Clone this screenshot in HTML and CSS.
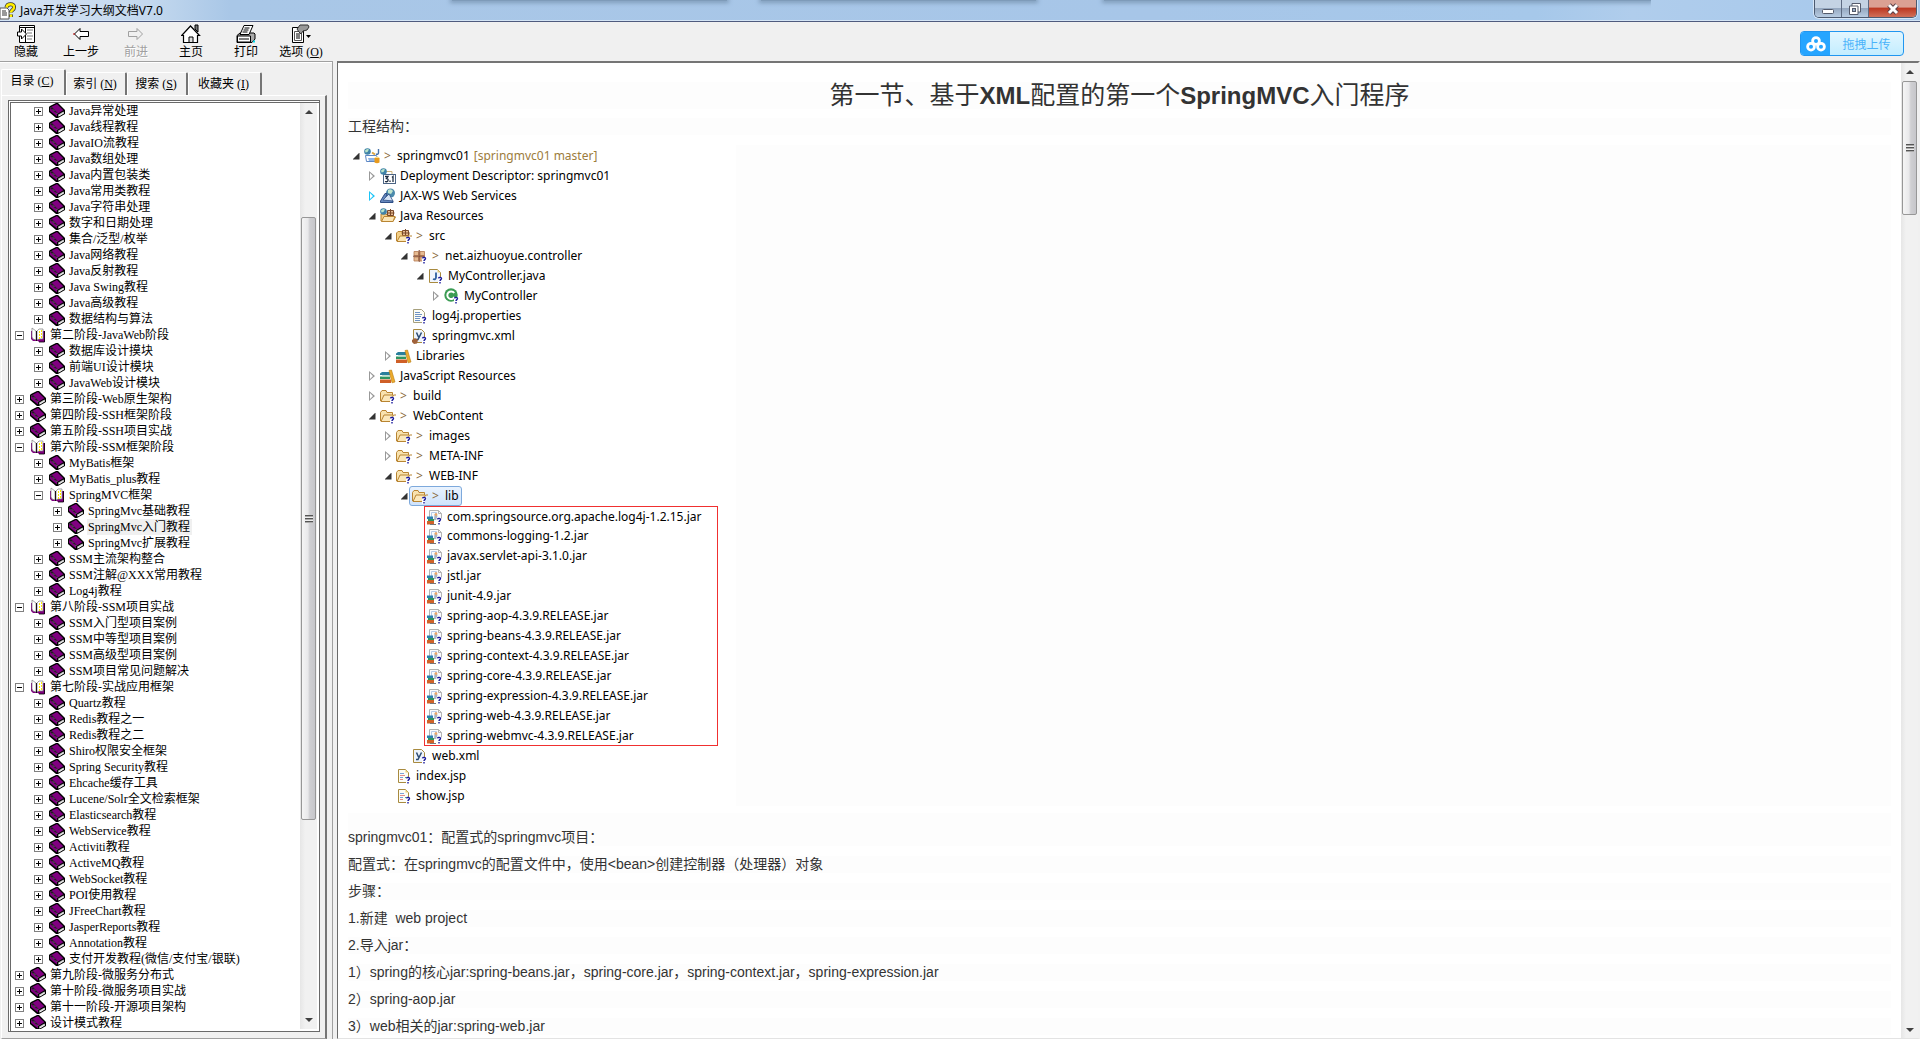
FILE: index.html
```html
<!DOCTYPE html>
<html lang="zh-CN">
<head>
<meta charset="utf-8">
<title>Java开发学习大纲文档V7.0</title>
<link rel="stylesheet" href="styles.css">
</head>
<body>
<svg class="sprite" aria-hidden="true">
  <symbol id="book" viewBox="0 0 16 16">
    <path d="M0 4 1 3 7 0h2l7 7v4l-7 4H7L0 9z" fill="#000"/>
    <path d="M2.500 3.800 8 1l6.300 6.200L9 10.500z" fill="#800080"/>
    <path d="M1 4.800 8 11v2.500L1 8z" fill="#800080"/>
    <path d="M9 11.800 14.500 8.500l.5 1.800L9.500 13.800z" fill="#c8c8c8"/>
    <path d="M10 12.800l5-3" stroke="#fff" stroke-width=".8"/>
    <path d="M2 4.500 8.500 11" stroke="#e8b8e8" stroke-width=".9" stroke-dasharray="1 1"/>
  </symbol>
  <symbol id="open" viewBox="0 0 16 16">
    <path d="M1 4h14v11H9l-1-1H3L1 12z" fill="#800080"/>
    <path d="M2 1l4 3v9L3 12 2 10zM7 4l2-2h4v10H9l-2 1z" fill="#fff" stroke="#808080" stroke-width=".7"/>
    <path d="M9.500 4v8M11.500 3v8" stroke="#ffe600" stroke-width="1" stroke-dasharray="2 1"/>
    <path d="M6.500 4v10M14.500 4v11H9" stroke="#000" fill="none" stroke-width=".8"/>
  </symbol>
  <symbol id="q" viewBox="0 0 16 16"><path d="M10 9h4.500v3H13v4h-3z" fill="#fff"/><path d="M10.500 10.300c.3-1.300 3.200-1.200 3 .3 0 1-1.500 1.100-1.500 2.400M12 14v1.500" fill="none" stroke="#1a1a9c" stroke-width="1.400"/></symbol>
  <symbol id="globe" viewBox="0 0 16 16"><circle cx="3.500" cy="3.500" r="3.300" fill="#3f83a8"/><path d="M1 2.500Q3 0 5 1.500L3.500 4 1.500 4.500z" fill="#b9e3c8"/></symbol>
  <symbol id="folder" viewBox="0 0 16 16"><path d="M.5 13V4.500L2 2.500h4l1 2h5.500V7" fill="#f8e2ae" stroke="#b98532"/><path d="M1 13.500 4 7h9.500l-3 6.500z" fill="#fbe8bb" stroke="#b98532"/><path d="M15 6v2" stroke="#b98532"/><use href="#q"/></symbol>
  <symbol id="project" viewBox="0 0 16 16"><path d="M1.500 7.500h11l2 6h-12z" fill="#fff" stroke="#5b86c4"/><path d="M4 10h8l1 3H5z" fill="#8fb5e6"/><path d="M8 4.500l3 2" stroke="#d9a441" stroke-width="2"/><path d="M14.500 1v4q-.5 2-2.500 1" fill="none" stroke="#4772aa" stroke-width="1.400"/><ellipse cx="13" cy="10" rx="2.500" ry="1.200" fill="#ffe08a"/><path d="M10.500 10h5v4.500q-2.500 1.500-5 0z" fill="#e89a1c"/><use href="#globe"/></symbol>
  <symbol id="deploy" viewBox="0 0 16 16"><path d="M5 3.500h7v4" fill="none" stroke="#c9b27c"/><rect x="3.500" y="6.500" width="12" height="9" fill="#fff" stroke="#4b6484"/><path d="M5 8.500h3l-1.500 2Q8.500 10.700 8 12.500T5 13.500M10 12.500v1.500M12 9.500l1-1V14" fill="none" stroke="#1d2c40" stroke-width="1.300"/><use href="#globe"/></symbol>
  <symbol id="ws" viewBox="0 0 16 16"><circle cx="10.500" cy="5" r="4.500" fill="#4b8aac"/><path d="M8 2q3-2 5 1l-2 3-3-1z" fill="#c1e4cd"/><path d="M.5 13 5 5.500h2L6 9l3 3 4 1v1.500H.5z" fill="#6587bd" stroke="#2f4f86"/><path d="M3 12 9 6l4 7z" fill="#d5e2f4" stroke="#2f4f86" stroke-width=".8"/></symbol>
  <symbol id="jres" viewBox="0 0 16 16"><path d="M1 13V6h5l1 1h6v2h2.500L13 13.500z" fill="#f3cf87" stroke="#b98532"/><path d="M7.500 2.500h6v5h-6zM10.500 1v7M6.500 5h8" fill="#e8bd93" stroke="#7b4a2b"/><path d="M4 8.500h11l-2 5H1.500z" fill="#fbe6b7" stroke="#b98532"/><use href="#globe"/></symbol>
  <symbol id="src" viewBox="0 0 16 16"><path d="M.5 13V5L2 3.500h4l1 1h6V8" fill="#f3cf87" stroke="#b98532"/><path d="M6.500 2.500h6v5h-6zM9.500 1v7M5.500 5h8" fill="#e8bd93" stroke="#7b4a2b"/><path d="M1 13.500 4 8h9l-2 5.500z" fill="#fbe6b7" stroke="#b98532"/><path d="M15 7v2" stroke="#b98532"/><use href="#q"/></symbol>
  <symbol id="pkg" viewBox="0 0 16 16"><path d="M2 3.500h4.500v4H2zM8 3.500h4.500v4H8zM2 9h4.500v4H2zM8 9h4.500v4H8z" fill="#e6bb92" stroke="#b47a52" stroke-width=".8"/><path d="M7.200 2v12M1 8.200h12" stroke="#7b3f22"/><use href="#q"/></symbol>
  <symbol id="java" viewBox="0 0 16 16"><path d="M1.500 1.500h8l3 3v10h-11z" fill="#f1f6fd" stroke="#a88a3f"/><path d="M9.500 1.500v3h3z" fill="#e8cc7c"/><path d="M8 4.500v5q-.3 2.500-3 1.500" fill="none" stroke="#2f5f9f" stroke-width="1.800"/><use href="#q"/></symbol>
  <symbol id="cls" viewBox="0 0 16 16"><circle cx="7" cy="7" r="6.700" fill="#3c9c54"/><path d="M10.200 5A3.800 3.800 0 1 0 10.500 9" fill="none" stroke="#fff" stroke-width="2"/><use href="#q"/></symbol>
  <symbol id="props" viewBox="0 0 16 16"><path d="M1.500 1.500h8l3 3v10h-11z" fill="#fdfdf6" stroke="#a6a07d"/><path d="M3 4.500h5M3 6.500h7M3 8.500h6M3 10.500h5M3 12.500h5" stroke="#6f93c4"/><use href="#q"/></symbol>
  <symbol id="xml" viewBox="0 0 16 16"><path d="M1.500 1.500h8l3 3v10h-11z" fill="#eef4fb" stroke="#a88a3f"/><path d="M4.500 4.500 6.500 9M9.500 4.500 6 11.500H4" fill="none" stroke="#2a4a72" stroke-width="1.500"/><use href="#q"/></symbol>
  <symbol id="bean" viewBox="0 0 16 16"><use href="#xml"/><path d="M0 12l3-2 3 2-1 3.500-3 .5-2-2z" fill="#a0623a"/></symbol>
  <symbol id="lib" viewBox="0 0 16 16"><path d="M0 5.500 2 4h8v3H0z" fill="#2a7f9c"/><path d="M0 8.500h10V11H0z" fill="#2f9560"/><path d="M2 7h8v1.500H2z" fill="#bfe0cf"/><path d="M0 11.500h11v3.500H0z" fill="#cf5f27"/><path d="M9 2.500 11.500 2 15 14l-3 .8z" fill="#edab2c" stroke="#b97c10" stroke-width=".6"/></symbol>
  <symbol id="jar" viewBox="0 0 16 16"><path d="M2.500 15V1.500h9l3 3V10" fill="#fafafa" stroke="#b3b3b3"/><path d="M11.500 1.500v3h3" fill="none" stroke="#b3b3b3"/><path d="M4.500 3.500h5v5M4.500 3.500v5" fill="none" stroke="#b5cbe8"/><path d="M7.500 5.500 9 4l1.500 3L9 11H7z" fill="#a9b3bf"/><circle cx="9" cy="5.500" r="1.300" fill="#f0a560"/><path d="M0 7.500h6V10H0z" fill="#2a7fb0"/><path d="M1 10h6v2H1z" fill="#2f9560"/><path d="M0 12h7v3.500H0z" fill="#d0622a"/><path d="M3 15.500h6" stroke="#777"/><use href="#q"/></symbol>
  <symbol id="jsp" viewBox="0 0 16 16"><path d="M2.500 1.500h7l3 3v10h-10z" fill="#fdfdf6" stroke="#a88a3f"/><path d="M9.500 1.500v3h3z" fill="#e8cc7c"/><path d="M4 5.500h4M4 9.500h3" stroke="#7ba0d8"/><path d="M4 7.500h5M4 11.500h3" stroke="#e28a8a"/><path d="M9 9.500h2" stroke="#62b07a"/><use href="#q"/></symbol>
</svg>

<header class="titlebar">
  <svg class="app-icon" viewBox="0 0 16 16"><path d="M0 5h7l2 2v9H0z" fill="#fff" stroke="#555"/><path d="M2 8h4M2 10h5M2 12h5" stroke="#333"/><path d="M6.500 4.500C7 0 14.500 0 14 4.500c0 2.500-3 2.500-3 5M11 11.500V14" fill="none" stroke="#333" stroke-width="4"/><path d="M6.500 4.500C7 0 14.500 0 14 4.500c0 2.500-3 2.500-3 5M11 11.500V14" fill="none" stroke="#ffee00" stroke-width="2.500"/></svg>
  <span class="caption">Java开发学习大纲文档V7.0</span>
  <div class="behind"><i></i><i></i><i></i></div>
  <div class="winbtns">
    <button class="wb" aria-label="最小化"><svg viewBox="0 0 14 14"><rect x="1.500" y="7.500" width="11" height="4" rx="1" fill="#fff" stroke="#535a6b"/></svg></button>
    <button class="wb" aria-label="还原"><svg viewBox="0 0 14 14"><path d="M4 1.500h8.500V10H4z" fill="#fff" stroke="#535a6b"/><path d="M1.500 4H10v8.500H1.500z" fill="#fff" stroke="#535a6b"/><rect x="4.500" y="6.500" width="3" height="3" fill="#9cb0c8" stroke="#535a6b"/></svg></button>
    <button class="wb close" aria-label="关闭"><svg viewBox="0 0 14 14"><path d="M3 3l8 8M11 3l-8 8" stroke="#5a4048" stroke-width="5"/><path d="M3 3l8 8M11 3l-8 8" stroke="#fff" stroke-width="3"/></svg></button>
  </div>
</header>

<nav class="toolbar">
  <button class="tool"><svg viewBox="0 0 20 20"><path d="M3.500 1.500h15v17h-15z" fill="#fff" stroke="#000"/><path d="M3 3.500h16M9.500 3v15" stroke="#000"/><path d="M11 6h6M11 9h5M11 12h6M11 15h5" stroke="#777"/><path d="M1.500 8h4V5l5 5-5 5v-3h-4z" fill="#fff" stroke="#000"/></svg>隐藏</button>
  <button class="tool"><svg viewBox="0 0 20 20"><path d="M9 4.500 3.500 10 9 15.500v-3h8.500v-5H9z" fill="#fff" stroke="#000"/><path d="M3 9v2" stroke="#b00"/></svg>上一步</button>
  <button class="tool" disabled><svg viewBox="0 0 20 20"><path d="M11 4.500 16.500 10 11 15.500v-3H2.500v-5H11z" fill="#f0f0f0" stroke="#a0a0a0"/></svg>前进</button>
  <button class="tool"><svg viewBox="0 0 20 20"><path d="M14 1h3v7l-3-3z" fill="#777" stroke="#000"/><path d="M.7 11.500 9.500 2l9 9.500h-2v7h-14v-7z" fill="#fff" stroke="#000" stroke-width="1.200"/><path d="M8 18v-5h4v5" fill="#ddd" stroke="#000"/></svg>主页</button>
  <button class="tool"><svg viewBox="0 0 20 20"><path d="M1 11.500 4 9h14l1 1v5l-3 3.500H1z" fill="#aaa" stroke="#000"/><path d="M4 10.500 8 1.500h9L13 10.500z" fill="#fff" stroke="#000"/><path d="M8.500 4h5M7.500 6h5M6.500 8h5" stroke="#000"/><path d="M1.500 12h13v6H1.500z" fill="#fff" stroke="#000"/><path d="M3 15h10" stroke="#000"/><path d="M17 17.500h2" stroke="#00d8e8" stroke-width="2"/></svg>打印</button>
  <button class="tool"><svg viewBox="0 0 20 20"><path d="M1.500 3.500h11v15h-11z" fill="#fff" stroke="#000"/><path d="M3.500 7.500h7v9h-7z" fill="#fff" stroke="#555"/><path d="M5 10h4M5 12h4M5 14h4" stroke="#000"/><path d="M6 5 9 1h8l1 2-2 3-4 1-2 3-2-2z" fill="#999" stroke="#333"/><path d="M15 11h5l-2.500 3z" fill="#000"/></svg>选项 (<u>O</u>)</button>
  <button class="upload"><span class="cloud"><svg viewBox="0 0 20 16"><g fill="none" stroke="#fff" stroke-width="2.800"><circle cx="10" cy="5" r="3.400"/><circle cx="5" cy="10.700" r="3.400"/><circle cx="15" cy="10.700" r="3.400"/></g></svg></span><span class="uptext">拖拽上传</span></button>
</nav>

<div class="work">
<aside class="side">
  <div class="tabs" role="tablist">
    <button class="tab on" role="tab">目录 (<u>C</u>)</button>
    <button class="tab" role="tab">索引 (<u>N</u>)</button>
    <button class="tab" role="tab">搜索 (<u>S</u>)</button>
    <button class="tab wide" role="tab">收藏夹 (<u>I</u>)</button>
  </div>
  <div class="panel">
    <div class="treebox">
      <ul class="toc">
        <li class="l1"><button class="tg"></button><svg><use href="#book"/></svg><a href="#">Java异常处理</a></li>
        <li class="l1"><button class="tg"></button><svg><use href="#book"/></svg><a href="#">Java线程教程</a></li>
        <li class="l1"><button class="tg"></button><svg><use href="#book"/></svg><a href="#">JavaIO流教程</a></li>
        <li class="l1"><button class="tg"></button><svg><use href="#book"/></svg><a href="#">Java数组处理</a></li>
        <li class="l1"><button class="tg"></button><svg><use href="#book"/></svg><a href="#">Java内置包装类</a></li>
        <li class="l1"><button class="tg"></button><svg><use href="#book"/></svg><a href="#">Java常用类教程</a></li>
        <li class="l1"><button class="tg"></button><svg><use href="#book"/></svg><a href="#">Java字符串处理</a></li>
        <li class="l1"><button class="tg"></button><svg><use href="#book"/></svg><a href="#">数字和日期处理</a></li>
        <li class="l1"><button class="tg"></button><svg><use href="#book"/></svg><a href="#">集合/泛型/枚举</a></li>
        <li class="l1"><button class="tg"></button><svg><use href="#book"/></svg><a href="#">Java网络教程</a></li>
        <li class="l1"><button class="tg"></button><svg><use href="#book"/></svg><a href="#">Java反射教程</a></li>
        <li class="l1"><button class="tg"></button><svg><use href="#book"/></svg><a href="#">Java Swing教程</a></li>
        <li class="l1"><button class="tg"></button><svg><use href="#book"/></svg><a href="#">Java高级教程</a></li>
        <li class="l1"><button class="tg"></button><svg><use href="#book"/></svg><a href="#">数据结构与算法</a></li>
        <li><button class="tg minus"></button><svg><use href="#open"/></svg><a href="#">第二阶段-JavaWeb阶段</a></li>
        <li class="l1"><button class="tg"></button><svg><use href="#book"/></svg><a href="#">数据库设计摸块</a></li>
        <li class="l1"><button class="tg"></button><svg><use href="#book"/></svg><a href="#">前端UI设计模块</a></li>
        <li class="l1"><button class="tg"></button><svg><use href="#book"/></svg><a href="#">JavaWeb设计模块</a></li>
        <li><button class="tg"></button><svg><use href="#book"/></svg><a href="#">第三阶段-Web原生架构</a></li>
        <li><button class="tg"></button><svg><use href="#book"/></svg><a href="#">第四阶段-SSH框架阶段</a></li>
        <li><button class="tg"></button><svg><use href="#book"/></svg><a href="#">第五阶段-SSH项目实战</a></li>
        <li><button class="tg minus"></button><svg><use href="#open"/></svg><a href="#">第六阶段-SSM框架阶段</a></li>
        <li class="l1"><button class="tg"></button><svg><use href="#book"/></svg><a href="#">MyBatis框架</a></li>
        <li class="l1"><button class="tg"></button><svg><use href="#book"/></svg><a href="#">MyBatis_plus教程</a></li>
        <li class="l1"><button class="tg minus"></button><svg><use href="#open"/></svg><a href="#">SpringMVC框架</a></li>
        <li class="l2"><button class="tg"></button><svg><use href="#book"/></svg><a href="#">SpringMvc基础教程</a></li>
        <li class="l2"><button class="tg"></button><svg><use href="#book"/></svg><a href="#" class="cur">SpringMvc入门教程</a></li>
        <li class="l2"><button class="tg"></button><svg><use href="#book"/></svg><a href="#">SpringMvc扩展教程</a></li>
        <li class="l1"><button class="tg"></button><svg><use href="#book"/></svg><a href="#">SSM主流架构整合</a></li>
        <li class="l1"><button class="tg"></button><svg><use href="#book"/></svg><a href="#">SSM注解@XXX常用教程</a></li>
        <li class="l1"><button class="tg"></button><svg><use href="#book"/></svg><a href="#">Log4j教程</a></li>
        <li><button class="tg minus"></button><svg><use href="#open"/></svg><a href="#">第八阶段-SSM项目实战</a></li>
        <li class="l1"><button class="tg"></button><svg><use href="#book"/></svg><a href="#">SSM入门型项目案例</a></li>
        <li class="l1"><button class="tg"></button><svg><use href="#book"/></svg><a href="#">SSM中等型项目案例</a></li>
        <li class="l1"><button class="tg"></button><svg><use href="#book"/></svg><a href="#">SSM高级型项目案例</a></li>
        <li class="l1"><button class="tg"></button><svg><use href="#book"/></svg><a href="#">SSM项目常见问题解决</a></li>
        <li><button class="tg minus"></button><svg><use href="#open"/></svg><a href="#">第七阶段-实战应用框架</a></li>
        <li class="l1"><button class="tg"></button><svg><use href="#book"/></svg><a href="#">Quartz教程</a></li>
        <li class="l1"><button class="tg"></button><svg><use href="#book"/></svg><a href="#">Redis教程之一</a></li>
        <li class="l1"><button class="tg"></button><svg><use href="#book"/></svg><a href="#">Redis教程之二</a></li>
        <li class="l1"><button class="tg"></button><svg><use href="#book"/></svg><a href="#">Shiro权限安全框架</a></li>
        <li class="l1"><button class="tg"></button><svg><use href="#book"/></svg><a href="#">Spring Security教程</a></li>
        <li class="l1"><button class="tg"></button><svg><use href="#book"/></svg><a href="#">Ehcache缓存工具</a></li>
        <li class="l1"><button class="tg"></button><svg><use href="#book"/></svg><a href="#">Lucene/Solr全文检索框架</a></li>
        <li class="l1"><button class="tg"></button><svg><use href="#book"/></svg><a href="#">Elasticsearch教程</a></li>
        <li class="l1"><button class="tg"></button><svg><use href="#book"/></svg><a href="#">WebService教程</a></li>
        <li class="l1"><button class="tg"></button><svg><use href="#book"/></svg><a href="#">Activiti教程</a></li>
        <li class="l1"><button class="tg"></button><svg><use href="#book"/></svg><a href="#">ActiveMQ教程</a></li>
        <li class="l1"><button class="tg"></button><svg><use href="#book"/></svg><a href="#">WebSocket教程</a></li>
        <li class="l1"><button class="tg"></button><svg><use href="#book"/></svg><a href="#">POI使用教程</a></li>
        <li class="l1"><button class="tg"></button><svg><use href="#book"/></svg><a href="#">JFreeChart教程</a></li>
        <li class="l1"><button class="tg"></button><svg><use href="#book"/></svg><a href="#">JasperReports教程</a></li>
        <li class="l1"><button class="tg"></button><svg><use href="#book"/></svg><a href="#">Annotation教程</a></li>
        <li class="l1"><button class="tg"></button><svg><use href="#book"/></svg><a href="#">支付开发教程(微信/支付宝/银联)</a></li>
        <li><button class="tg"></button><svg><use href="#book"/></svg><a href="#">第九阶段-微服务分布式</a></li>
        <li><button class="tg"></button><svg><use href="#book"/></svg><a href="#">第十阶段-微服务项目实战</a></li>
        <li><button class="tg"></button><svg><use href="#book"/></svg><a href="#">第十一阶段-开源项目架构</a></li>
        <li><button class="tg"></button><svg><use href="#book"/></svg><a href="#">设计模式教程</a></li>
      </ul>
      <div class="scroll toc-scroll"><button class="sb" aria-label="向上"><i class="up"></i></button><span class="before"></span><span class="thumb"><i></i></span><span class="after"></span><button class="sb" aria-label="向下"><i class="down"></i></button></div>
    </div>
  </div>
</aside>

<main class="doc">
  <article class="page">
    <h1>第一节、基于<b>XML</b>配置的第一个<b>SpringMVC</b>入门程序</h1>
    <p>工程结构：</p>
    <div class="figure">
    <ul class="ex">
      <li><i class="ar o"></i><svg><use href="#project"/></svg><em>&gt;</em>springmvc01 <span class="repo">[springmvc01 master]</span></li>
      <li class="d1"><i class="ar c"></i><svg><use href="#deploy"/></svg>Deployment Descriptor: springmvc01</li>
      <li class="d1"><i class="ar c hot"></i><svg><use href="#ws"/></svg>JAX-WS Web Services</li>
      <li class="d1"><i class="ar o"></i><svg><use href="#jres"/></svg>Java Resources</li>
      <li class="d2"><i class="ar o"></i><svg><use href="#src"/></svg><em>&gt;</em>src</li>
      <li class="d3"><i class="ar o"></i><svg><use href="#pkg"/></svg><em>&gt;</em>net.aizhuoyue.controller</li>
      <li class="d4"><i class="ar o"></i><svg><use href="#java"/></svg>MyController.java</li>
      <li class="d5"><i class="ar c"></i><svg><use href="#cls"/></svg>MyController</li>
      <li class="d3"><i class="ar"></i><svg><use href="#props"/></svg>log4j.properties</li>
      <li class="d3"><i class="ar"></i><svg><use href="#bean"/></svg>springmvc.xml</li>
      <li class="d2"><i class="ar c"></i><svg><use href="#lib"/></svg>Libraries</li>
      <li class="d1"><i class="ar c"></i><svg><use href="#lib"/></svg>JavaScript Resources</li>
      <li class="d1"><i class="ar c"></i><svg><use href="#folder"/></svg><em>&gt;</em>build</li>
      <li class="d1"><i class="ar o"></i><svg><use href="#folder"/></svg><em>&gt;</em>WebContent</li>
      <li class="d2"><i class="ar c"></i><svg><use href="#folder"/></svg><em>&gt;</em>images</li>
      <li class="d2"><i class="ar c"></i><svg><use href="#folder"/></svg><em>&gt;</em>META-INF</li>
      <li class="d2"><i class="ar o"></i><svg><use href="#folder"/></svg><em>&gt;</em>WEB-INF</li>
      <li class="d3"><i class="ar o"></i><span class="sel"><svg><use href="#folder"/></svg><em>&gt;</em>lib</span></li>
      <li class="jars"><ul>
        <li><svg><use href="#jar"/></svg>com.springsource.org.apache.log4j-1.2.15.jar</li>
        <li><svg><use href="#jar"/></svg>commons-logging-1.2.jar</li>
        <li><svg><use href="#jar"/></svg>javax.servlet-api-3.1.0.jar</li>
        <li><svg><use href="#jar"/></svg>jstl.jar</li>
        <li><svg><use href="#jar"/></svg>junit-4.9.jar</li>
        <li><svg><use href="#jar"/></svg>spring-aop-4.3.9.RELEASE.jar</li>
        <li><svg><use href="#jar"/></svg>spring-beans-4.3.9.RELEASE.jar</li>
        <li><svg><use href="#jar"/></svg>spring-context-4.3.9.RELEASE.jar</li>
        <li><svg><use href="#jar"/></svg>spring-core-4.3.9.RELEASE.jar</li>
        <li><svg><use href="#jar"/></svg>spring-expression-4.3.9.RELEASE.jar</li>
        <li><svg><use href="#jar"/></svg>spring-web-4.3.9.RELEASE.jar</li>
        <li><svg><use href="#jar"/></svg>spring-webmvc-4.3.9.RELEASE.jar</li>
      </ul></li>
      <li class="d3"><i class="ar"></i><svg><use href="#xml"/></svg>web.xml</li>
      <li class="d2"><i class="ar"></i><svg><use href="#jsp"/></svg>index.jsp</li>
      <li class="d2"><i class="ar"></i><svg><use href="#jsp"/></svg>show.jsp</li>
    </ul>
    </div>
    <p class="lead">springmvc01：配置式的springmvc项目：</p>
    <p>配置式：在springmvc的配置文件中，使用&lt;bean&gt;创建控制器（处理器）对象</p>
    <p>步骤：</p>
    <p>1.新建&nbsp; web project</p>
    <p>2.导入jar：</p>
    <p>1）spring的核心jar:spring-beans.jar，spring-core.jar，spring-context.jar，spring-expression.jar</p>
    <p>2）spring-aop.jar</p>
    <p>3）web相关的jar:spring-web.jar</p>
  </article>
  <div class="scroll doc-scroll"><button class="sb" aria-label="向上"><i class="up"></i></button><span class="before"></span><span class="thumb"><i></i></span><span class="after"></span><button class="sb" aria-label="向下"><i class="down"></i></button></div>
</main>
</div>
</body>
</html>
```
FILE: styles.css
```css
* { box-sizing: border-box; }
body {
  margin: 0;
  height: 100vh;
  display: flex;
  flex-direction: column;
  overflow: hidden;
  background: #f0f0f0;
  color: #000;
  font: 12px/16px "Liberation Serif", "Noto Sans CJK SC", sans-serif;
}
button { margin: 0; padding: 0; border: 0; background: none; font: inherit; color: inherit; }
ul { margin: 0; padding: 0; list-style: none; }
a { color: inherit; text-decoration: none; }
svg { display: block; flex: none; }
.sprite { position: absolute; width: 0; height: 0; }

/* title bar */
.titlebar {
  position: relative;
  flex: none;
  height: 22px;
  display: flex;
  background: linear-gradient(90deg, #d5e3f3 0, #c3d8ee 150px, #a9c7e7 230px, #a7c6e8 60%, #a6c8ea 80%, #b0cdec 85%, #a5c8ec 100%);
  border-bottom: 1px solid #4f5b7e;
  box-shadow: inset 0 -1px #d3e4f5;
  font-family: "Noto Sans", "Noto Sans CJK SC", sans-serif;
}
.app-icon { width: 16px; height: 18px; margin-top: 2px; }
.caption { padding: 3px 0 0 4px; }
/* shadows of the windows lying behind the glass title bar */
.behind {
  position: absolute;
  inset: 0 14% 0 23%;
  display: grid;
  grid-template-columns: 275px 275px 1fr;
  column-gap: 34px;
  overflow: hidden;
  padding-left: 10px;
}
.behind i { height: 1px; background: #7e9bb9; box-shadow: 0 0 4px 2px #7e9bb9; }
.behind i:last-child { margin-left: 34px; }
.winbtns {
  position: relative;
  margin: 0 3px 0 auto;
  display: flex;
  height: 18px;
  border: 1px solid #4c5a70;
  border-top: 0;
  border-radius: 0 0 5px 5px;
  overflow: hidden;
  box-shadow: 0 0 0 1px #d6e6f7;
}
.wb {
  width: 27px;
  display: flex;
  align-items: center;
  justify-content: center;
  border-right: 1px solid #5d6b82;
  background: linear-gradient(#c4d3e4 0 45%, #95a8c0 50%, #b8cce2);
}
.wb.close { width: 47px; border-right: 0; background: linear-gradient(#dba093 0 40%, #bd3a24 50%, #d0705a); }
.wb svg { width: 14px; height: 14px; }

/* toolbar */
.toolbar { flex: none; height: 39px; display: flex; }
.tool { width: 55px; padding: 0 3px 0 0; text-align: center; white-space: nowrap; }
.tool svg { width: 20px; height: 20px; margin: 0 auto; }
.tool:disabled { color: #a0a0a0; text-shadow: 1px 1px #fff; }
.upload {
  margin: 9px 16px 0 auto;
  width: 104px;
  height: 25px;
  display: flex;
  border: 1px solid #2196f0;
  border-radius: 4px;
  overflow: hidden;
  background: linear-gradient(#e2f6ff, #c3edff);
  color: #4ab3fa;
  font-family: "Noto Sans CJK SC", sans-serif;
}
.cloud { width: 29px; height: 23px; background: #26a5ff; display: grid; place-items: center; }
.cloud svg { width: 20px; height: 16px; }
.uptext { flex: 1; line-height: 23px; }

/* work area */
.work { flex: 1; min-height: 0; display: flex; }
.side {
  flex: none;
  width: 333px;
  display: flex;
  flex-direction: column;
  padding: 7px 5px 0 1px;
  border-top: 1px solid #a0a0a0;
  border-right: 1px solid #a0a0a0;
  box-shadow: inset 0 1px #fff;
}
.tabs { display: flex; align-items: flex-end; height: 26px; flex: none; }
.tab {
  width: 61px;
  height: 23px;
  padding-right: 2px;
  border-top: 1px solid #fff;
  border-left: 1px solid #fff;
  border-right: 2px solid #757575;
  border-radius: 2px 2px 0 0;
  white-space: nowrap;
}
.tab.on { width: 65px; height: 26px; padding-bottom: 3px; }
.tab.wide { width: 74px; }
.panel {
  flex: 1;
  min-height: 0;
  display: flex;
  padding: 4px 5px 6px 6px;
  border: 1px solid #fff;
  border-right: 2px solid #757575;
  border-bottom: 1px solid #a0a0a0;
}
.treebox {
  flex: 1;
  min-width: 0;
  display: flex;
  overflow: hidden;
  background: #fff;
  border: 3px double #696969;
  border-right: 1px solid #696969;
  border-bottom: 1px solid #696969;
  padding: 0 2px 2px 0;
}
.toc { flex: 1; min-width: 0; overflow: hidden; }
.toc li { display: flex; align-items: center; height: 16px; padding-left: 4px; white-space: nowrap; }
.toc .l1 { padding-left: 23px; }
.toc .l2 { padding-left: 42px; }
.toc svg { width: 16px; height: 16px; margin: 0 3px 0 6px; }
.toc a { padding: 0 2px 0 1px; }
.toc .cur { background: #f0f0f0; }
.tg {
  flex: none;
  width: 9px;
  height: 9px;
  border: 1px solid #808080;
  background: linear-gradient(#000, #000) center / 5px 1px no-repeat, linear-gradient(#000, #000) center / 1px 5px no-repeat, #fff;
}
.tg.minus { background: linear-gradient(#000, #000) center / 5px 1px no-repeat, #fff; }

/* scroll bars */
.scroll { flex: none; width: 17px; display: flex; flex-direction: column; align-items: center; background: linear-gradient(90deg, #e6e6e6, #f1f1f1 30%); }
.sb { flex: none; width: 17px; height: 17px; display: grid; place-items: center; }
.up, .down { border: 4px solid transparent; }
.up { border-top: 0; border-bottom-color: #404040; }
.down { border-bottom: 0; border-top-color: #404040; }
.thumb {
  width: 15px;
  display: grid;
  place-items: center;
  border: 1px solid #979797;
  border-radius: 2px;
  background: linear-gradient(90deg, #f5f5f5, #e9e9eb 45%, #cfcfd2 60%, #c6c6ca);
}
.thumb i { width: 8px; height: 8px; background: repeating-linear-gradient(#555 0 1px, #aaa 1px 2px, #eee 2px 3px); }
.toc-scroll .before { flex: 97; }
.toc-scroll .thumb { flex: 603; }
.toc-scroll .after { flex: 192; }
.doc-scroll .before { flex: 1; }
.doc-scroll .thumb { flex: 132; }
.doc-scroll .after { flex: 808; }

/* document */
.doc {
  flex: 1;
  min-width: 0;
  margin-left: 4px;
  display: flex;
  overflow: hidden;
  background: #fff;
  border: 1px solid #696969;
  border-top: 2px solid #757575;
  border-right: 2px solid #f0f0f0;
  border-bottom: 1px solid #e3e3e3;
}
.page {
  flex: 1;
  min-width: 0;
  overflow: hidden;
  padding: 19px 10px 0;
  color: #333;
  font: 14px/17px "Liberation Sans", "Noto Sans CJK SC", sans-serif;
}
.page h1 { margin: 0 0 9px; font-size: 25px; line-height: 27px; font-weight: 400; text-align: center; background: #fdfdfd; }
.page h1 b { font-size: 24px; }
.page p { margin: 0 0 10px; background: #fdfdfd; }
.page p.lead { padding-top: 16px; }
.figure { background: #fdfdfd; margin-bottom: 7px; }
.ex {
  width: 388px;
  padding: 1px 0 0;
  background: #fff;
  color: #000;
  font: 12px/20px "Noto Sans", "Noto Sans CJK SC", sans-serif;
}
.ex li { display: flex; align-items: center; height: 20px; white-space: nowrap; }
.ex svg { width: 16px; height: 16px; margin-right: 4px; }
.ex em { width: 13px; font-style: normal; color: #8a6a3c; }
.repo { margin-left: 4px; color: #9c7c3c; }
.ex .d1 { padding-left: 16px; }
.ex .d2 { padding-left: 32px; }
.ex .d3 { padding-left: 48px; }
.ex .d4 { padding-left: 64px; }
.ex .d5 { padding-left: 80px; }
.ar { width: 16px; height: 10px; display: grid; place-items: center; }
.ar.o::before { content: ""; width: 7px; height: 7px; background: #333; clip-path: polygon(100% 0, 100% 100%, 0 100%); }
.ar.c::before { content: ""; width: 6px; height: 10px; background: #999; clip-path: polygon(0 0, 100% 50%, 0 100%, 0 0, 1px 2px, 1px 8px, 4px 50%, 1px 2px); }
.ar.c.hot::before { background: #1cc4f7; }
.sel { display: flex; align-items: center; height: 20px; margin-left: -3px; padding: 0 2px; border: 1px solid #7da9dc; border-radius: 3px; background: linear-gradient(#eaf3fe, #cfe3fc); }
.ex .jars { height: auto; padding-left: 76px; }
.jars ul { width: 294px; border: 1px solid #f03030; padding: 0 2px; }
.jars li:first-child, .jars li:last-child { height: 19px; }
```
